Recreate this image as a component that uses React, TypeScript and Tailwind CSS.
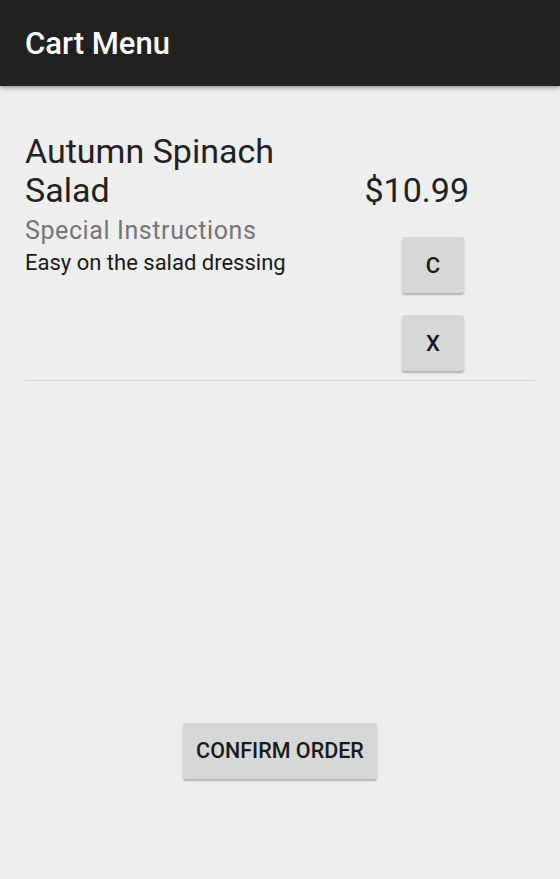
import React from 'react';

const font = { fontFamily: 'Roboto, "Noto Sans", sans-serif' };

const SmallButton: React.FC<{ label: string }> = ({ label }) => (
    <button className="w-[62px] h-[56px] bg-[#d6d7d7] rounded-[3px] shadow-[0_2px_2px_rgba(0,0,0,0.25)] text-[22px] font-medium text-[#1a1a1a] flex items-center justify-center">
        {label}
    </button>
);

const App: React.FC = () => {
    return (
        <div className="min-h-[879px] bg-[#eeeeee] flex flex-col" style={font}>
            <header className="h-[86px] bg-[#212121] flex items-center px-[25px] shadow-[0_2px_4px_rgba(0,0,0,0.35)] relative z-10">
                <h1 className="text-[31px] font-medium text-white leading-none">Cart Menu</h1>
            </header>

            <div className="px-[25px] pt-[46px]">
                <div className="flex">
                    <div className="flex-1 flex flex-col">
                        <div className="text-[34px] leading-[39px] text-[#212121]">
                            Autumn Spinach<br />Salad
                        </div>
                        <div className="text-[25px] leading-[28px] tracking-[0.6px] text-[#757575] mt-[7px]">Special Instructions</div>
                        <div className="text-[22px] leading-[25px] text-[#1a1a1a] mt-[5px]">Easy on the salad dressing</div>
                    </div>
                    <div className="flex flex-col items-end mr-[66px] pt-[39px]">
                        <div className="text-[34px] leading-[39px] text-[#212121]">$10.99</div>
                        <div className="flex flex-col gap-[22px] mt-[27px] mr-[5px]">
                            <SmallButton label="C" />
                            <SmallButton label="X" />
                        </div>
                    </div>
                </div>
                <div className="h-px bg-[#d0d0d0] mt-[9px]" />
            </div>

            <div className="flex justify-center mt-[342px]">
                <button className="w-[194px] h-[56px] bg-[#d6d7d7] rounded-[3px] shadow-[0_2px_2px_rgba(0,0,0,0.25)] text-[21.5px] font-medium text-[#1a1a1a]">
                    CONFIRM ORDER
                </button>
            </div>
        </div>
    );
};

export default App;
